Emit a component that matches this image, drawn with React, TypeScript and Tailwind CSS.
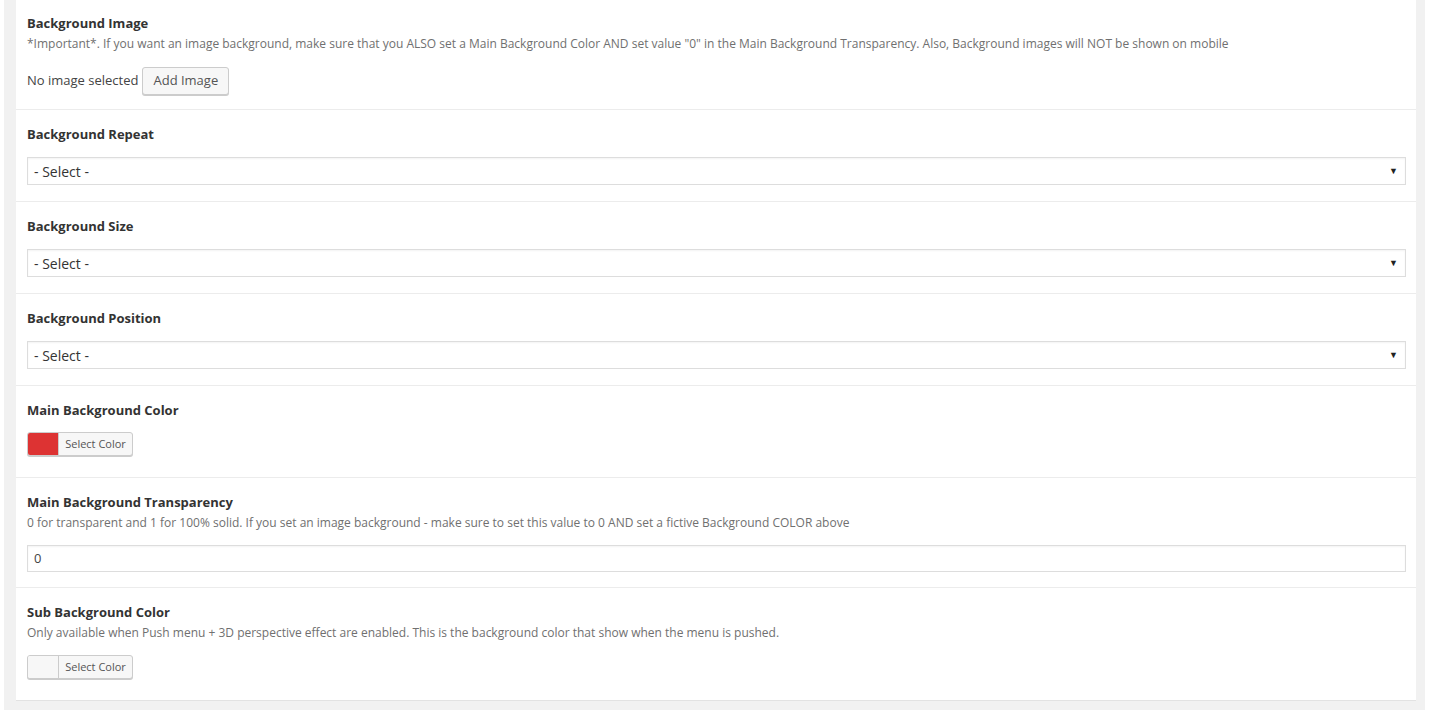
const font = { fontFamily: '"Open Sans", "Noto Sans", sans-serif' };

function Title({ children }: { children: string }) {
  return <h3 className="text-[13px] font-bold leading-[20px] text-[#333]">{children}</h3>;
}

function Desc({ children }: { children: string }) {
  return <p className="mt-[2px] text-[12px] leading-[18px] text-[#707070]">{children}</p>;
}

function FakeSelect() {
  return (
    <div className="mt-[13px] flex h-[28px] items-center justify-between border border-[#dddddd] bg-white pl-[6px] pr-[7px] shadow-[inset_0_1px_2px_rgba(0,0,0,0.05)]">
      <span className="text-[14px] text-[#333]">- Select -</span>
      <span className="text-[9px] text-[#222]">▼</span>
    </div>
  );
}

function ColorButton({ color }: { color: string }) {
  return (
    <div className="flex h-[24px] w-[106px] overflow-hidden rounded-[3px] border border-[#cccccc] bg-[#f7f7f7] shadow-[0_1px_0_#cccccc]">
      <span className={`w-[31px] border-r border-[#cccccc] ${color}`} />
      <span className="flex flex-1 items-center justify-center text-[11px] text-[#555]">Select Color</span>
    </div>
  );
}

function Section({ children, className = "" }: { children: React.ReactNode; className?: string }) {
  return <div className={`border-b border-[#ececec] pl-[11px] pr-[10px] ${className}`}>{children}</div>;
}

export default function App() {
  return (
    <div className="h-[711px] bg-white pl-[4px] pr-[6px]" style={font}>
      <div className="bg-[#f1f1f1] pb-[9px] pl-[12px] pr-[9px]">
        <div className="border-b border-[#e2e2e2] bg-white">
          <Section className="pb-[14px] pt-[13px]">
            <Title>Background Image</Title>
            <Desc>
              *Important*. If you want an image background, make sure that you ALSO set a Main Background Color AND set value "0" in the Main Background Transparency. Also, Background images will NOT be shown on mobile
            </Desc>
            <div className="mt-[14px] flex items-center gap-[4px]">
              <span className="text-[13px] text-[#444]">No image selected</span>
              <button
                type="button"
                className="h-[28px] rounded-[3px] border border-[#cccccc] bg-[#f7f7f7] px-[10px] text-[13px] text-[#555] shadow-[0_1px_0_#cccccc]"
              >
                Add Image
              </button>
            </div>
          </Section>

          {["Background Repeat", "Background Size", "Background Position"].map((label) => (
            <Section key={label} className="pb-[16px] pt-[14px]">
              <Title>{label}</Title>
              <FakeSelect />
            </Section>
          ))}

          <Section className="pb-[21px] pt-[14px]">
            <Title>Main Background Color</Title>
            <div className="mt-[12px]">
              <ColorButton color="bg-[#dd3333]" />
            </div>
          </Section>

          <Section className="pb-[15px] pt-[14px]">
            <Title>Main Background Transparency</Title>
            <Desc>
              0 for transparent and 1 for 100% solid. If you set an image background - make sure to set this value to 0 AND set a fictive Background COLOR above
            </Desc>
            <div className="mt-[13px] flex h-[27px] items-center border border-[#dddddd] px-[6px] text-[13px] text-[#444] shadow-[inset_0_1px_2px_rgba(0,0,0,0.05)]">
              0
            </div>
          </Section>

          <div className="pb-[21px] pl-[11px] pr-[10px] pt-[14px]">
            <Title>Sub Background Color</Title>
            <Desc>
              Only available when Push menu + 3D perspective effect are enabled. This is the background color that show when the menu is pushed.
            </Desc>
            <div className="mt-[13px]">
              <ColorButton color="bg-[#f7f7f7]" />
            </div>
          </div>
        </div>
      </div>
    </div>
  );
}
